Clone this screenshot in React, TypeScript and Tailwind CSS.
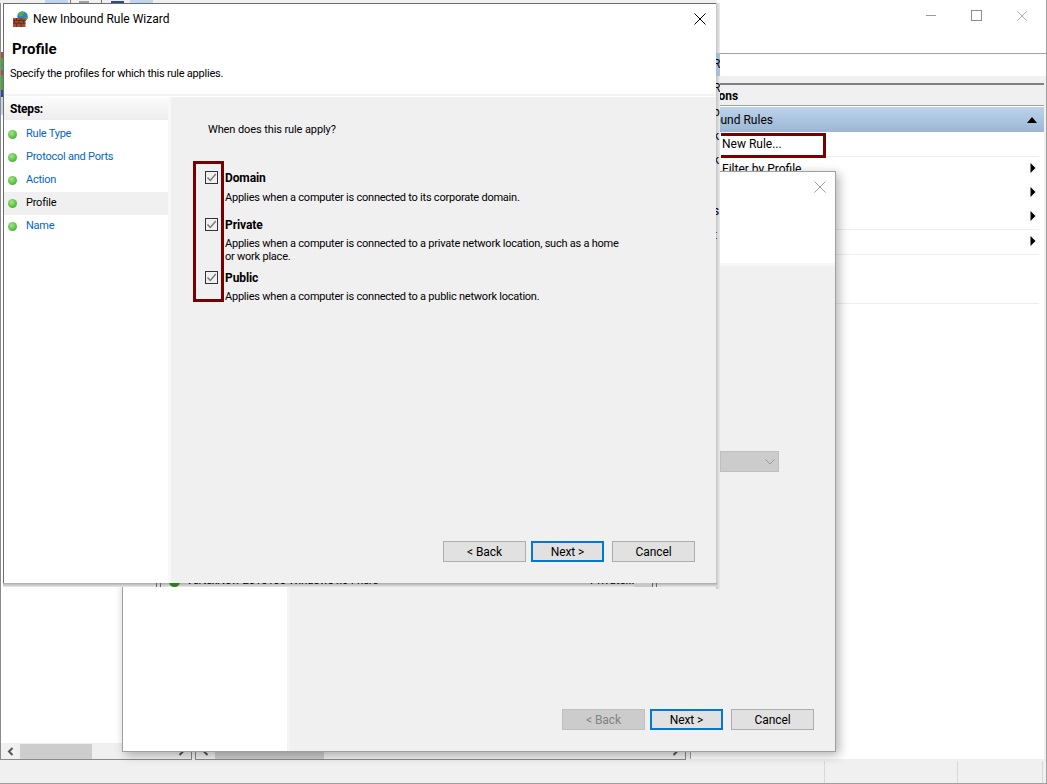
import React from "react";

const FONT = "font-['Roboto','Liberation_Sans',sans-serif]";

const steps = [
  { label: "Rule Type" },
  { label: "Protocol and Ports" },
  { label: "Action" },
  { label: "Profile", current: true },
  { label: "Name" },
];

const profiles = [
  {
    name: "Domain",
    text: ["Applies when a computer is connected to its corporate domain."],
    rowClass: "h-[47px]",
    textClass: "mt-[5px]",
  },
  {
    name: "Private",
    text: [
      "Applies when a computer is connected to a private network location, such as a home",
      "or work place.",
    ],
    rowClass: "h-[53px]",
    textClass: "mt-[4px]",
  },
  {
    name: "Public",
    text: ["Applies when a computer is connected to a public network location."],
    rowClass: "h-[40px]",
    textClass: "mt-[4px]",
  },
];

// letters of the window behind that stick out next to the wizard's edge
const peeking = [
  { ch: "R", cls: "top-[54px]" },
  { ch: "R", cls: "top-[78px]" },
  { ch: "b", cls: "top-[102px]" },
  { ch: "k", cls: "top-[126px]" },
  { ch: "k", cls: "top-[150px]" },
  { ch: "s", cls: "top-[201px]" },
  { ch: "t", cls: "top-[225px]" },
];

const FirewallIcon = () => (
  <svg width="16" height="16" viewBox="0 0 16 16">
    <circle cx="9.500" cy="5.500" r="5.300" fill="#2f7fd0" />
    <path d="M6 2c2-1.600 4.500-1.300 5.500-.5-.3 1.700-2 2.300-3 4L5.500 5z" fill="#4fae3c" />
    <path d="M11 6.500l3.800-.8c0 2.200-1 3.400-2.800 4z" fill="#4fae3c" />
    <path d="M0 7h12.500v9H0z" fill="#a34e33" />
    <path d="M0 9.500h12.500M0 12.200h12.500M3.500 7v2.500M8 7v2.500M1.500 9.500v2.700M6 9.500v2.700M10.500 9.500v2.700M3.500 12.200V16M8 12.200V16" stroke="#5f2a1c" strokeWidth="0.9" fill="none" />
  </svg>
);

const CloseGlyph = ({ color, size = 12 }: { color: string; size?: number }) => (
  <svg width={size} height={size} viewBox="0 0 12 12">
    <path d="M.5.500l11 11M11.500.500l-11 11" stroke={color} strokeWidth="1" fill="none" />
  </svg>
);

const Arrow = () => (
  <svg width="6" height="10" viewBox="0 0 6 10" className="-translate-y-px">
    <path d="M.5 0L5.500 5 .5 10z" fill="#000" />
  </svg>
);

const ScrollChevron = ({ flip }: { flip?: boolean }) => (
  <svg width="7" height="9" viewBox="0 0 7 9" className={flip ? "rotate-180" : ""}>
    <path d="M5.500 1L2 4.500 5.500 8" stroke="#555555" strokeWidth="2" fill="none" />
  </svg>
);

const Bullet = () => (
  <span className="block w-[9px] h-[9px] rounded-full bg-[radial-gradient(circle_at_40%_35%,#a6e58e,#4cb833_70%)]" />
);

const Button = ({
  children,
  focused,
  disabled,
  width,
}: {
  children: string;
  focused?: boolean;
  disabled?: boolean;
  width: string;
}) => (
  <div
    className={`h-[21px] flex items-center justify-center text-[12px] tracking-[-0.1px] ${width} ${
      focused
        ? "border-2 border-[#0078d7] bg-[#e1e1e1] text-black"
        : disabled
          ? "border border-[#bfbfbf] bg-[#cccccc] text-[#838383]"
          : "border border-[#adadad] bg-[#e1e1e1] text-black"
    }`}
  >
    {children}
  </div>
);

const Checkbox = () => (
  <div className="w-[13px] h-[13px] border border-[#333333] bg-[#f0f0f0] flex items-center justify-center">
    <svg width="11" height="11" viewBox="0 0 11 11">
      <path d="M1.500 5.500l2.800 3L9.800 2" stroke="#777777" strokeWidth="1.400" fill="none" />
    </svg>
  </div>
);

const ActionRow = ({
  label,
  arrow,
  rowClass,
}: {
  label?: string;
  arrow?: boolean;
  rowClass: string;
}) => (
  <div className={`flex items-center justify-between mr-[5px] pl-[31px] pr-[3px] ${rowClass}`}>
    <span className="text-[12px] text-black">{label}</span>
    {arrow && <Arrow />}
  </div>
);

const ScrollBar = ({ thumb }: { thumb: string }) => (
  <div className="h-[16px] bg-[#f0f0f0] flex items-center pl-[6px] pr-[6px]">
    <ScrollChevron />
    <div className={`ml-[6px] h-[15px] bg-[#cdcdcd] ${thumb}`} />
    <div className="ml-auto">
      <ScrollChevron flip />
    </div>
  </div>
);

const BackgroundWindow = () => (
  <div className="absolute inset-0 bg-white flex flex-col border-r-[1px] border-[#a0a0a0]">
    <div className="h-[54px] shrink-0 border-b border-[#a0a0aa] flex justify-end items-start">
      <div className="flex items-center gap-[35px] pt-[10px] pr-[19px]">
        <div className="w-[10px] h-px bg-[#9a9a9a]" />
        <div className="w-[11px] h-[11px] border border-[#8c8c8c]" />
        <CloseGlyph color="#9a9a9a" size={10} />
      </div>
    </div>
    <div className="h-[22px] shrink-0 bg-white" />
    <div className="flex-1 flex min-h-0 bg-[#f0f0f0] pt-[7px] pr-[2px]">
      <div className="w-[192px] shrink-0 flex flex-col bg-white border-l border-r border-b border-[#8a8a8a]">
        <div className="flex-1" />
        <ScrollBar thumb="w-[72px]" />
      </div>
      <div className="w-[491px] ml-[3px] shrink-0 flex flex-col bg-white border-l border-r border-b border-[#8a8a8a]">
        <div className="flex-1" />
        <ScrollBar thumb="w-[109px]" />
      </div>
      <div className="flex-1 ml-[4px] flex flex-col bg-white border-l border-t-2 border-l-[#a0a0a0] border-t-[#808080] mb-[1px]">
        <div className="h-[21px] bg-[#f0f0f0] border-b border-[#a0a0aa] pl-[6px] pt-[2px] flex items-center text-[12px] font-bold text-black">
          Actions
        </div>
        <div className="h-[25px] mt-[1px] pl-[6px] pr-[7px] flex items-center justify-between text-[12px] text-black bg-[linear-gradient(#bcd3ea,#9cb6d4)]">
          <span>Inbound Rules</span>
          <svg width="10" height="6" viewBox="0 0 10 6">
            <path d="M0 6L5 0l5 6z" fill="#000" />
          </svg>
        </div>
        <ActionRow label="New Rule..." rowClass="h-[25px] border-b border-[#eeeeee]" />
        <ActionRow label="Filter by Profile" arrow rowClass="h-[24px]" />
        <ActionRow arrow rowClass="h-[24px]" />
        <ActionRow arrow rowClass="h-[25px] border-b border-[#eeeeee]" />
        <ActionRow arrow rowClass="h-[25px] border-b border-[#eeeeee]" />
        <ActionRow rowClass="h-[49px] border-b border-[#eeeeee]" />
      </div>
    </div>
    <div className="h-[24px] shrink-0 bg-[#f0f0f0] border-b border-[#a0a0a0] flex justify-end pt-[1px] pr-[3px]">
      <div className="w-[133px] border-l border-[#d8d8d8]" />
      <div className="w-[86px] border-l border-r border-[#d8d8d8]" />
    </div>
  </div>
);

const BackWizard = () => (
  <div className="absolute left-[122px] top-[171px] w-[714px] h-[581px] bg-[#f0f0f0] border border-[#a0a0a0] shadow-[3px_3px_10px_rgba(0,0,0,0.3)] flex flex-col">
    <div className="h-[94px] shrink-0 bg-white border-b-[3px] border-[#f7f7f7] flex justify-end pt-[9px] pr-[9px]">
      <CloseGlyph color="#a0a0a0" />
    </div>
    <div className="flex-1 flex min-h-0">
      <div className="w-[167px] shrink-0 bg-white border-r-[3px] border-[#f4f4f4]" />
      <div className="flex-1 relative">
        <div className="absolute left-[430px] top-[185px] w-[59px] h-[21px] bg-[#cccccc] border border-[#bfbfbf] flex items-center justify-end pr-[2px]">
          <svg width="10" height="6" viewBox="0 0 10 6" className="mr-[1px]">
            <path d="M.5.500L5 5 9.500.500" stroke="#9a9a9a" fill="none" />
          </svg>
        </div>
        <div className="absolute right-[21px] bottom-[21px] flex gap-[5px]">
          <Button disabled width="w-[83px]">{"< Back"}</Button>
          <Button focused width="w-[73px]">{"Next >"}</Button>
          <Button width="w-[83px] ml-[3px]">Cancel</Button>
        </div>
      </div>
    </div>
  </div>
);

const FrontWizard = () => (
  <div className="absolute left-[3px] top-[3px] w-[714px] h-[581px] bg-white border border-[#6e6e6e] flex flex-col">
    {/* baked in window shadow, with the window behind showing through */}
    <div className="absolute left-full top-[-1px] bottom-[-6px] w-[4px] overflow-hidden bg-[linear-gradient(90deg,#c4c4c4,#ececec)]">
      <div className="absolute left-0 top-[50px] w-full h-[23px] bg-[#9fb6d2] opacity-80" />
      {peeking.map((p) => (
        <span key={p.cls} className={`absolute left-[-3px] text-[12px] leading-[14px] text-black ${p.cls}`}>
          {p.ch}
        </span>
      ))}
    </div>
    <div className="absolute left-[-1px] top-full w-[714px] h-[4px] overflow-hidden bg-[linear-gradient(#a9a9a9,#e8e8e8)]">
      <div className="absolute left-[153px] top-0 w-[5px] h-full border-l border-r border-[#666666]" />
      <div className="absolute left-[166px] top-[-7px] w-[11px] h-[11px] rounded-full bg-[#2e7d22]" />
      <span className="absolute left-[183px] top-[-10px] text-[11.500px] tracking-[-0.3px] leading-[14px] whitespace-nowrap text-black">
        VertexNow-2016105-Windows-x64-here
      </span>
      <span className="absolute left-[587px] top-[-10px] text-[11.500px] leading-[14px] text-black">Private...</span>
      <div className="absolute left-[631px] top-0 w-[18px] h-full bg-[#c8c8c8]" />
      <div className="absolute left-[649px] top-0 w-[5px] h-full border-l border-r border-[#666666]" />
    </div>

    <div className="h-[30px] shrink-0 flex items-center pl-[9px] pr-[10px]">
      <FirewallIcon />
      <span className="ml-[4px] text-[12px] text-black">New Inbound Rule Wizard</span>
      <div className="ml-auto">
        <CloseGlyph color="#000" />
      </div>
    </div>
    <div className="h-[62px] shrink-0 pl-[6px] border-b-2 border-[#f4f4f4]">
      <div className="pl-[2px] pt-[5px] text-[15px] font-bold text-black leading-[20px]">Profile</div>
      <div className="mt-[7px] text-[11px] tracking-[-0.23px] text-black leading-[16px]">
        Specify the profiles for which this rule applies.
      </div>
    </div>
    <div className="flex-1 flex min-h-0 pt-[1px]">
      <div className="w-[167px] shrink-0 bg-white border-r-[3px] border-[#f8f8f8]">
        <div className="h-[23px] pl-[6px] flex items-center text-[12px] font-bold tracking-[-0.2px] text-black bg-[linear-gradient(#fcfcfc,#ededed)]">
          Steps:
        </div>
        <div className="pt-[3px] flex flex-col">
          {steps.map((s) => (
            <div
              key={s.label}
              className={`h-[23px] flex items-center pl-[4px] text-[11px] tracking-[-0.23px] ${
                s.current ? "bg-[#f0f0f0] text-black" : "text-[#0066cc]"
              }`}
            >
              <Bullet />
              <span className="ml-[9px]">{s.label}</span>
            </div>
          ))}
        </div>
      </div>
      <div className="flex-1 bg-[#f0f0f0] relative">
        <div className="pl-[37px] pt-[25px] text-[11px] tracking-[-0.1px] text-black leading-[16px]">
          When does this rule apply?
        </div>
        <div className="relative ml-[22px] mt-[24px] w-fit">
          <div className="absolute left-0 top-[-1px] w-[31px] h-[141px] border-[3px] border-[#770000]" />
          <div className="pl-[12px] pt-[8px] flex flex-col">
            {profiles.map((p) => (
              <div key={p.name} className={`flex ${p.rowClass}`}>
                <div className="w-[20px] shrink-0 pt-[1px]">
                  <Checkbox />
                </div>
                <div className="flex flex-col">
                  <div className="text-[12px] font-bold tracking-[-0.1px] text-black leading-[16px]">{p.name}</div>
                  <div className={`${p.textClass} text-[11px] tracking-[-0.23px] text-black leading-[13px]`}>
                    {p.text.map((line) => (
                      <div key={line}>{line}</div>
                    ))}
                  </div>
                </div>
              </div>
            ))}
          </div>
        </div>
        <div className="absolute right-[21px] bottom-[21px] flex gap-[5px]">
          <Button width="w-[83px]">{"< Back"}</Button>
          <Button focused width="w-[73px]">{"Next >"}</Button>
          <Button width="w-[83px] ml-[3px]">Cancel</Button>
        </div>
      </div>
    </div>
  </div>
);

// bits of the main window's toolbar and tree that remain visible around the wizard
const TopFragments = () => (
  <div className="absolute left-0 top-0 w-[717px] h-[3px] bg-[#f0f0f0]">
    <div className="absolute left-[45px] top-0 w-[23px] h-full bg-[#bdd5ee]" />
    <div className="absolute left-[70px] top-0 w-px h-full bg-[#777777]" />
    <div className="absolute left-[79px] top-[1px] w-[10px] h-[2px] bg-[#a0a0a0]" />
    <div className="absolute left-[101px] top-0 w-px h-full bg-[#777777]" />
    <div className="absolute left-[111px] top-[1px] w-[13px] h-[2px] bg-[#2b4a9b]" />
    <div className="absolute left-[130px] top-0 w-[23px] h-full bg-[#bdd5ee]" />
  </div>
);

const LeftFragments = () => (
  <div className="absolute left-0 top-[3px] w-[3px] h-[585px] bg-white border-l border-[#8a8a8a]">
    <div className="absolute left-0 top-[49px] w-[2px] h-[6px] bg-[#a5523a]" />
    <div className="absolute left-0 top-[55px] w-[2px] h-[12px] bg-[#4aa53a]" />
    <div className="absolute left-0 top-[67px] w-[2px] h-[5px] bg-[#a5523a]" />
    <div className="absolute left-0 top-[72px] w-[2px] h-[15px] bg-[#4aa53a]" />
    <div className="absolute left-0 top-[87px] w-[2px] h-[7px] bg-[#2b4a9b]" />
    <div className="absolute left-0 top-[94px] w-[2px] h-[18px] bg-[#c4d6ea]" />
  </div>
);

export default function App() {
  return (
    <div className={`relative w-[1047px] h-[784px] overflow-hidden bg-white ${FONT}`}>
      <BackgroundWindow />
      <div className="absolute left-[721px] top-[133px] w-[105px] h-[25px] border-[3px] border-l-0 border-[#770000]" />
      <TopFragments />
      <LeftFragments />
      <BackWizard />
      <FrontWizard />
    </div>
  );
}
